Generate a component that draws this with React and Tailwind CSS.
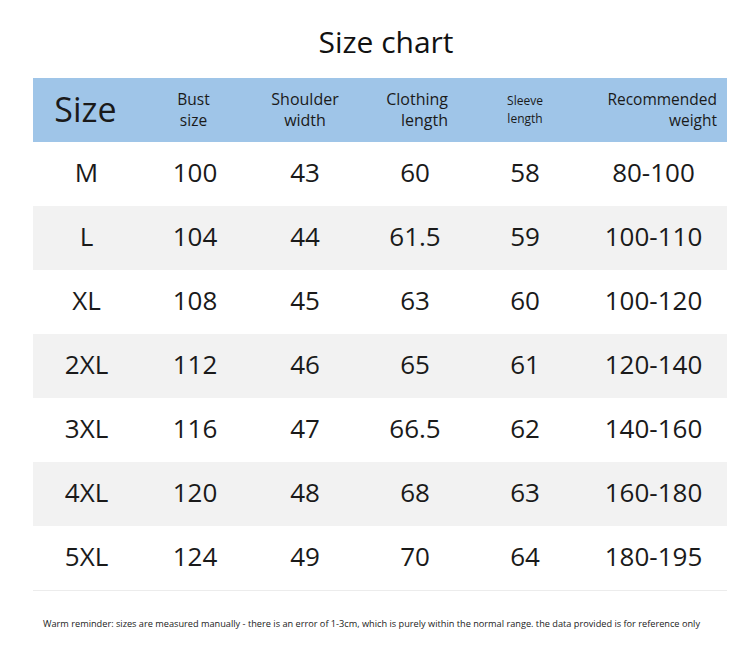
import React from "react";

const ROWS = [
  ["M", "100", "43", "60", "58", "80-100"],
  ["L", "104", "44", "61.5", "59", "100-110"],
  ["XL", "108", "45", "63", "60", "100-120"],
  ["2XL", "112", "46", "65", "61", "120-140"],
  ["3XL", "116", "47", "66.5", "62", "140-160"],
  ["4XL", "120", "48", "68", "63", "160-180"],
  ["5XL", "124", "49", "70", "64", "180-195"],
];

const cols = "grid grid-cols-[107px_110px_110px_110px_110px_147px]";

export default function App() {
  return (
    <div
      className="w-[750px] h-[671px] bg-white text-[#1a1a1a] flex flex-col"
      style={{ fontFamily: '"Open Sans", "Noto Sans", sans-serif' }}
    >
      <h1 className="mt-[22px] pl-[22px] text-center text-[30px] leading-[40px] text-[#111]">
        Size chart
      </h1>

      <div className="mt-[16px] ml-[33px] w-[694px] flex flex-col">
        <div className={`${cols} h-[64px] bg-[#9fc5e8] items-center`}>
          <div className="text-[34px] leading-none text-center pb-[2px] pr-[2px]">Size</div>
          <div className="text-[15.5px] leading-[21px] text-center pr-[3px]">
            Bust
            <br />
            size
          </div>
          <div className="text-[16px] leading-[21px] text-center">
            Shoulder
            <br />
            width
          </div>
          <div className="text-[16px] leading-[21px] text-right pr-[22px]">
            Clothing
            <br />
            length
          </div>
          <div className="text-[12px] leading-[18px] text-center">
            Sleeve
            <br />
            length
          </div>
          <div className="text-[15.5px] leading-[21px] text-right pr-[10px]">
            Recommended
            <br />
            weight
          </div>
        </div>

        {ROWS.map((r, i) => (
          <div
            key={r[0]}
            className={`${cols} h-[64px] items-center text-[26px] text-center pb-[3px] ${
              i % 2 === 1 ? "bg-[#f2f2f2]" : "bg-white"
            }`}
          >
            {r.map((c, j) => (
              <div key={j}>{c}</div>
            ))}
          </div>
        ))}
        <div className="h-px bg-[#ececec]" />
      </div>

      <p className="mt-[26px] pl-[43px] text-[9.2px] text-[#222] whitespace-nowrap">
        Warm reminder: sizes are measured manually - there is an error of 1-3cm, which is purely within the normal range. the data provided is for reference only
      </p>
    </div>
  );
}
